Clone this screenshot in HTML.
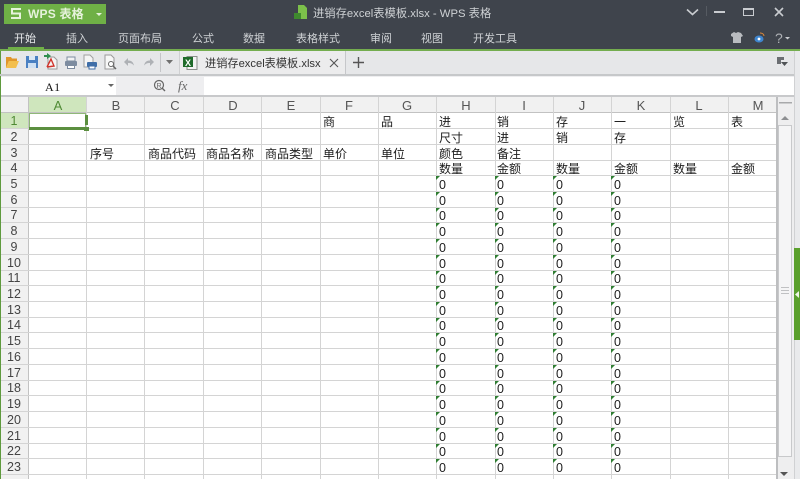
<!DOCTYPE html>
<html><head><meta charset="utf-8"><style>
html,body{margin:0;padding:0;width:800px;height:479px;overflow:hidden;background:#fff}
svg{display:block}
.ui{font-family:"Liberation Sans","Noto Sans CJK SC",sans-serif;font-size:11px;fill:#cfd2d5}
.cell{font-family:"Liberation Sans","Noto Sans CJK SC",sans-serif;font-size:12px;fill:#1c1c1c}
.rh{font-family:"Liberation Sans",sans-serif;font-size:12.500px;fill:#444;text-anchor:middle}
.ch{font-family:"Liberation Sans",sans-serif;font-size:13px;fill:#555;text-anchor:middle}
</style></head><body>
<svg width="800" height="479" viewBox="0 0 800 479" xmlns="http://www.w3.org/2000/svg">
<rect width="800" height="49" fill="#3f444c"/>
<rect x="4" y="4" width="102" height="20" fill="#6fb046"/>
<path d="M21 9h-9v4.500h8v4.500h-9" fill="none" stroke="#e6f2dc" stroke-width="2"/>
<text x="28" y="18" class="ui" style="fill:#e6f2dc;font-size:12px;font-weight:bold;letter-spacing:.2px">WPS 表格</text>
<path d="M96 13h6l-3 3z" fill="#e6f2dc"/>
<path d="M298 5h6l3 3v11h-9z" fill="#7cc04a"/><rect x="294" y="13" width="7" height="6" fill="#3f8a2e"/>
<text x="313" y="17" class="ui" style="font-size:11.300px">进销存excel表模板.xlsx - WPS 表格</text>
<path d="M687 9.500l5.500 5 5.500-5" fill="none" stroke="#c9ccd0" stroke-width="1.600"/>
<rect x="706" y="6" width="1" height="10" fill="#565b62"/>
<rect x="714" y="11" width="11" height="2" fill="#c9ccd0"/>
<path d="M743.500 8.500h10v7h-10z" fill="none" stroke="#c9ccd0"/><rect x="743" y="8" width="11" height="2" fill="#c9ccd0"/>
<path d="M775 8l8 8M783 8l-8 8" stroke="#c9ccd0" stroke-width="1.600"/>
<text x="14" y="42" class="ui" style="fill:#e8eaec">开始</text>
<text x="66" y="42" class="ui">插入</text>
<text x="118" y="42" class="ui">页面布局</text>
<text x="192" y="42" class="ui">公式</text>
<text x="243" y="42" class="ui">数据</text>
<text x="296" y="42" class="ui">表格样式</text>
<text x="370" y="42" class="ui">审阅</text>
<text x="421" y="42" class="ui">视图</text>
<text x="473" y="42" class="ui">开发工具</text>
<rect x="8" y="47" width="36" height="2" fill="#6fb046"/>
<path d="M731 34l3-2 2 1 2-1 3 1 2 3-2 1v6h-8v-6l-2-1z" fill="#b9bcc0"/>
<ellipse cx="759" cy="39" rx="4.500" ry="3.500" fill="#3f86cf"/><circle cx="759" cy="39" r="1.400" fill="#fff"/><path d="M760 33c2 0 4 1 4 3" stroke="#e08a3a" fill="none"/>
<text x="775" y="43" class="ui" style="font-size:14px;fill:#aeb1b5">?</text><path d="M785 37h5l-2.500 2.500z" fill="#c9ccd0"/>
<rect y="49" width="800" height="2" fill="#74ad4f"/>
<rect y="51" width="800" height="23" fill="#e6e7e9"/>
<rect y="51" width="1" height="428" fill="#5f9a3e"/>
<path d="M6 68v-11h5l1 1.500h5v2.500h-8z" fill="#e0962a"/><path d="M6 68l3-7h10l-3 7z" fill="#f3bf4e"/>
<path d="M26 56h12v12H26z" fill="#4a80c2"/><rect x="29" y="56" width="6" height="4" fill="#dbe8f5"/><rect x="28" y="63" width="8" height="5" fill="#cfe0f2"/>
<path d="M48 57h6l3 3v9H48z" fill="#f5f5f5" stroke="#9a9a9a"/><path d="M44 55h3v-2l4 3-4 3v-2h-3z" fill="#2f8f4f"/><path d="M47 67l4-8 3 7-7 1" fill="none" stroke="#d0342c" stroke-width="1.400"/>
<rect x="65" y="61" width="12" height="5" rx="1" fill="#7d8ca0"/><rect x="67" y="57" width="8" height="4" fill="#f3f3f3" stroke="#7d8ca0"/><rect x="67.500" y="65.500" width="7" height="3" fill="#fff" stroke="#7d8ca0"/>
<path d="M84 55h6l3 3v9h-9z" fill="#f5f5f5" stroke="#a0a0a0"/><rect x="87" y="62" width="10" height="5" rx="1" fill="#3f6ea8"/><rect x="89" y="66" width="6" height="3" fill="#fff" stroke="#3f6ea8"/>
<path d="M105 55h6l3 3v11h-9z" fill="#f7f7f7" stroke="#9a9a9a"/><circle cx="111" cy="64" r="2.500" fill="#fff" stroke="#666"/><path d="M113 66l3 3" stroke="#666" stroke-width="1.500"/>
<path d="M124 62l4-4v2.500c3 0 5 1 6 5-2-2-3-2.500-6-2.500V66z" fill="#aeb1b5"/>
<path d="M154 62l-4-4v2.500c-3 0-5 1-6 5 2-2 3-2.500 6-2.500V66z" fill="#aeb1b5"/>
<rect x="160" y="53" width="1" height="19" fill="#c4c5c8"/>
<path d="M166 60h7l-3.500 4z" fill="#707070"/>
<rect x="179" y="51" width="166" height="23" fill="#ececed"/><rect x="345" y="51" width="1" height="23" fill="#c6c7ca"/><rect x="179" y="51" width="1" height="23" fill="#cfd0d2"/>
<rect x="187" y="56.500" width="10" height="13" fill="#f3f3f3" stroke="#8a8f8a"/><rect x="183" y="57" width="10" height="10" fill="#1f6b2a"/>
<text x="185" y="66" style="font:bold 9px 'Liberation Sans';fill:#fff">X</text>
<text x="205" y="67" class="ui" style="fill:#333;font-size:11.200px">进销存excel表模板.xlsx</text>
<path d="M330 59l8 8M338 59l-8 8" stroke="#555" stroke-width="1.100"/>
<path d="M358.500 57v11M353 62.500h11" stroke="#555" stroke-width="1.400"/>
<rect x="777" y="57" width="7" height="7" fill="#6b6e72"/><rect x="781" y="60" width="7" height="4" fill="#e6e7e9"/><path d="M781 62h7l-3.500 4z" fill="#4f5255"/>
<rect y="74" width="796" height="2" fill="#c6c8ca"/>
<rect x="1" y="76" width="799" height="21" fill="#eeeef0"/>
<rect x="1" y="77" width="115" height="18" fill="#fff"/>
<text x="45" y="91" style="font:12px 'Liberation Serif';fill:#111;letter-spacing:.5px">A1</text>
<path d="M108 84h6l-3 3z" fill="#666"/>
<circle cx="159" cy="85" r="4.500" fill="none" stroke="#666" stroke-width="1.200"/><path d="M162 88l3 3" stroke="#666" stroke-width="1.400"/><text x="156.500" y="88" style="font:7px 'Liberation Sans';fill:#666">R</text>
<text x="178" y="90" style="font:italic 13px 'Liberation Serif';fill:#666">fx</text>
<rect x="204" y="77" width="590" height="18" fill="#fff"/>
<rect x="1" y="95" width="795" height="2" fill="#c8c9cb"/>
<rect x="1" y="97" width="775" height="16" fill="#f1f1f1"/>
<rect x="1" y="113" width="28" height="366" fill="#f1f1f1"/>
<rect x="29" y="97" width="58" height="16" fill="#cfe6bd"/>
<rect x="1" y="113" width="28" height="16" fill="#cfe6bd"/>
<g fill="#d4d4d4">
<rect x="1" y="112" width="775" height="1" fill="#c2c2c2"/>
<rect x="28" y="97" width="1" height="382" fill="#c2c2c2"/>
<rect x="86" y="97" width="1" height="382"/><rect x="144" y="97" width="1" height="382"/><rect x="203" y="97" width="1" height="382"/><rect x="261" y="97" width="1" height="382"/><rect x="320" y="97" width="1" height="382"/><rect x="378" y="97" width="1" height="382"/><rect x="436" y="97" width="1" height="382"/><rect x="495" y="97" width="1" height="382"/><rect x="553" y="97" width="1" height="382"/><rect x="611" y="97" width="1" height="382"/><rect x="670" y="97" width="1" height="382"/><rect x="728" y="97" width="1" height="382"/>
<rect x="1" y="128" width="775" height="1"/><rect x="1" y="144" width="775" height="1"/><rect x="1" y="160" width="775" height="1"/><rect x="1" y="175" width="775" height="1"/><rect x="1" y="191" width="775" height="1"/><rect x="1" y="207" width="775" height="1"/><rect x="1" y="222" width="775" height="1"/><rect x="1" y="238" width="775" height="1"/><rect x="1" y="254" width="775" height="1"/><rect x="1" y="270" width="775" height="1"/><rect x="1" y="285" width="775" height="1"/><rect x="1" y="301" width="775" height="1"/><rect x="1" y="317" width="775" height="1"/><rect x="1" y="332" width="775" height="1"/><rect x="1" y="348" width="775" height="1"/><rect x="1" y="364" width="775" height="1"/><rect x="1" y="380" width="775" height="1"/><rect x="1" y="395" width="775" height="1"/><rect x="1" y="411" width="775" height="1"/><rect x="1" y="427" width="775" height="1"/><rect x="1" y="443" width="775" height="1"/><rect x="1" y="458" width="775" height="1"/><rect x="1" y="474" width="775" height="1"/>
</g>
<g class="ch">
<text x="58" y="110" style="fill:#4f8a34">A</text><text x="116" y="110">B</text><text x="175" y="110">C</text><text x="233" y="110">D</text><text x="291" y="110">E</text><text x="349" y="110">F</text><text x="407" y="110">G</text><text x="466" y="110">H</text><text x="524" y="110">I</text><text x="582" y="110">J</text><text x="641" y="110">K</text><text x="699" y="110">L</text><text x="758" y="110">M</text>
</g>
<g class="rh">
<text x="14" y="125" style="fill:#4f8a34">1</text><text x="14" y="141">2</text><text x="14" y="157">3</text><text x="14" y="172">4</text><text x="14" y="188">5</text><text x="14" y="204">6</text><text x="14" y="219">7</text><text x="14" y="235">8</text><text x="14" y="251">9</text><text x="14" y="267">10</text><text x="14" y="282">11</text><text x="14" y="298">12</text><text x="14" y="314">13</text><text x="14" y="329">14</text><text x="14" y="345">15</text><text x="14" y="361">16</text><text x="14" y="377">17</text><text x="14" y="392">18</text><text x="14" y="408">19</text><text x="14" y="424">20</text><text x="14" y="440">21</text><text x="14" y="455">22</text><text x="14" y="471">23</text>
</g>
<g class="cell">
<text x="323" y="126">商</text><text x="381" y="126">品</text><text x="439" y="126">进</text><text x="497" y="126">销</text><text x="556" y="126">存</text><text x="614" y="126">一</text><text x="673" y="126">览</text><text x="731" y="126">表</text>
<text x="439" y="142">尺寸</text><text x="497" y="142">进</text><text x="556" y="142">销</text><text x="614" y="142">存</text>
<text x="90" y="158">序号</text><text x="148" y="158">商品代码</text><text x="206" y="158">商品名称</text><text x="265" y="158">商品类型</text><text x="323" y="158">单价</text><text x="381" y="158">单位</text><text x="439" y="158">颜色</text><text x="497" y="158">备注</text>
<text x="439" y="173">数量</text><text x="497" y="173">金额</text><text x="556" y="173">数量</text><text x="614" y="173">金额</text><text x="673" y="173">数量</text><text x="731" y="173">金额</text>
<g style="font-size:12.500px">
<text x="439 497 556 614" y="189">0000</text><text x="439 497 556 614" y="205">0000</text><text x="439 497 556 614" y="220">0000</text><text x="439 497 556 614" y="236">0000</text><text x="439 497 556 614" y="252">0000</text><text x="439 497 556 614" y="268">0000</text><text x="439 497 556 614" y="283">0000</text><text x="439 497 556 614" y="299">0000</text><text x="439 497 556 614" y="315">0000</text><text x="439 497 556 614" y="330">0000</text><text x="439 497 556 614" y="346">0000</text><text x="439 497 556 614" y="362">0000</text><text x="439 497 556 614" y="378">0000</text><text x="439 497 556 614" y="393">0000</text><text x="439 497 556 614" y="409">0000</text><text x="439 497 556 614" y="425">0000</text><text x="439 497 556 614" y="441">0000</text><text x="439 497 556 614" y="456">0000</text><text x="439 497 556 614" y="472">0000</text>
</g>
</g>
<defs><path id="t" d="M0 0h4l-4 4z" fill="#2f7d32"/></defs>
<g transform="translate(-1,0)">
<use href="#t" x="437" y="176"/><use href="#t" x="496" y="176"/><use href="#t" x="554" y="176"/><use href="#t" x="612" y="176"/>
<use href="#t" x="437" y="192"/><use href="#t" x="496" y="192"/><use href="#t" x="554" y="192"/><use href="#t" x="612" y="192"/>
<use href="#t" x="437" y="208"/><use href="#t" x="496" y="208"/><use href="#t" x="554" y="208"/><use href="#t" x="612" y="208"/>
<use href="#t" x="437" y="223"/><use href="#t" x="496" y="223"/><use href="#t" x="554" y="223"/><use href="#t" x="612" y="223"/>
<use href="#t" x="437" y="239"/><use href="#t" x="496" y="239"/><use href="#t" x="554" y="239"/><use href="#t" x="612" y="239"/>
<use href="#t" x="437" y="255"/><use href="#t" x="496" y="255"/><use href="#t" x="554" y="255"/><use href="#t" x="612" y="255"/>
<use href="#t" x="437" y="271"/><use href="#t" x="496" y="271"/><use href="#t" x="554" y="271"/><use href="#t" x="612" y="271"/>
<use href="#t" x="437" y="286"/><use href="#t" x="496" y="286"/><use href="#t" x="554" y="286"/><use href="#t" x="612" y="286"/>
<use href="#t" x="437" y="302"/><use href="#t" x="496" y="302"/><use href="#t" x="554" y="302"/><use href="#t" x="612" y="302"/>
<use href="#t" x="437" y="318"/><use href="#t" x="496" y="318"/><use href="#t" x="554" y="318"/><use href="#t" x="612" y="318"/>
<use href="#t" x="437" y="333"/><use href="#t" x="496" y="333"/><use href="#t" x="554" y="333"/><use href="#t" x="612" y="333"/>
<use href="#t" x="437" y="349"/><use href="#t" x="496" y="349"/><use href="#t" x="554" y="349"/><use href="#t" x="612" y="349"/>
<use href="#t" x="437" y="365"/><use href="#t" x="496" y="365"/><use href="#t" x="554" y="365"/><use href="#t" x="612" y="365"/>
<use href="#t" x="437" y="381"/><use href="#t" x="496" y="381"/><use href="#t" x="554" y="381"/><use href="#t" x="612" y="381"/>
<use href="#t" x="437" y="396"/><use href="#t" x="496" y="396"/><use href="#t" x="554" y="396"/><use href="#t" x="612" y="396"/>
<use href="#t" x="437" y="412"/><use href="#t" x="496" y="412"/><use href="#t" x="554" y="412"/><use href="#t" x="612" y="412"/>
<use href="#t" x="437" y="428"/><use href="#t" x="496" y="428"/><use href="#t" x="554" y="428"/><use href="#t" x="612" y="428"/>
<use href="#t" x="437" y="444"/><use href="#t" x="496" y="444"/><use href="#t" x="554" y="444"/><use href="#t" x="612" y="444"/>
<use href="#t" x="437" y="459"/><use href="#t" x="496" y="459"/><use href="#t" x="554" y="459"/><use href="#t" x="612" y="459"/>
</g>
<rect x="29.500" y="113.500" width="56" height="14" fill="#fff" stroke="#8fb878"/>
<rect x="85" y="115" width="3" height="10" fill="#5b8f3f"/>
<rect x="29" y="127" width="55" height="3" fill="#5b8f3f"/>
<rect x="84" y="127" width="5" height="4" fill="#5b8f3f"/>
<rect x="776" y="97" width="18" height="382" fill="#eeeeef"/>
<rect x="776" y="97" width="2" height="382" fill="#bdbec0"/>
<rect x="779" y="102" width="13" height="1.500" fill="#a8a9ab"/>
<path d="M781 120h8l-4-4z" fill="#8d8f92"/>
<rect x="778.500" y="125.500" width="13" height="331" fill="#f5f5f6" stroke="#c8c9cb"/>
<rect x="781" y="287" width="8" height="1" fill="#c0c1c3"/><rect x="781" y="290" width="8" height="1" fill="#c0c1c3"/><rect x="781" y="293" width="8" height="1" fill="#c0c1c3"/>
<path d="M780 472h8l-4 4z" fill="#555"/>
<rect x="794" y="51" width="6" height="428" fill="#e9eaec"/>
<rect x="794" y="51" width="1" height="428" fill="#d0d1d3"/>
<rect x="794" y="248" width="6" height="92" fill="#5aa02c"/>
<path d="M799 291v7l-4-3.500z" fill="#eef6e6"/>
</svg>
</body></html>
